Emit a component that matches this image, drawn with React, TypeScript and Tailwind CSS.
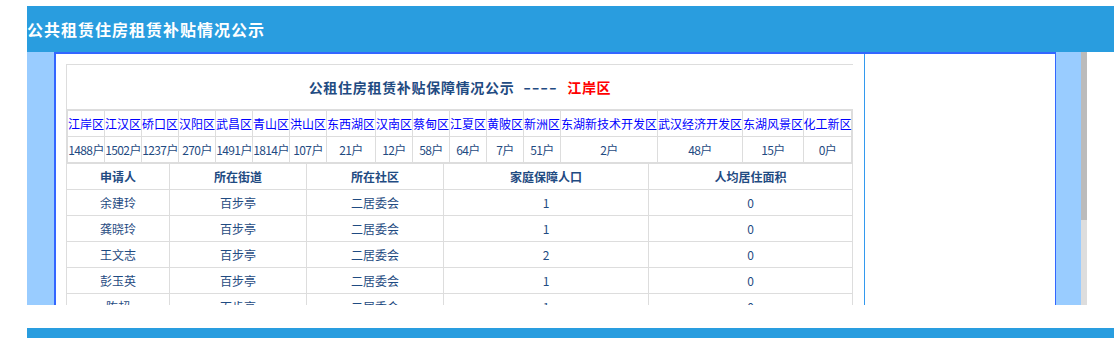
const districts: [string, string, number][] = [
  ["江岸区", "1488户", 37],
  ["江汉区", "1502户", 37],
  ["硚口区", "1237户", 37],
  ["汉阳区", "270户", 37],
  ["武昌区", "1491户", 37],
  ["青山区", "1814户", 37],
  ["洪山区", "107户", 37],
  ["东西湖区", "21户", 49],
  ["汉南区", "12户", 37],
  ["蔡甸区", "58户", 37],
  ["江夏区", "64户", 37],
  ["黄陂区", "7户", 37],
  ["新洲区", "51户", 37],
  ["东湖新技术开发区", "2户", 97],
  ["武汉经济开发区", "48户", 85],
  ["东湖风景区", "15户", 61],
  ["化工新区", "0户", 47],
];

const widthClass: Record<number, string> = {
  37: "w-[37px]",
  49: "w-[49px]",
  97: "w-[97px]",
  85: "w-[85px]",
  61: "w-[61px]",
  47: "w-[47px]",
};

const rows = [
  ["余建玲", "百步亭", "二居委会", "1", "0"],
  ["龚晓玲", "百步亭", "二居委会", "1", "0"],
  ["王文志", "百步亭", "二居委会", "2", "0"],
  ["彭玉英", "百步亭", "二居委会", "1", "0"],
  ["陈超", "百步亭", "二居委会", "1", "0"],
];

const colClass = [
  "w-[103px]",
  "w-[137px]",
  "w-[137px]",
  "w-[205px]",
  "w-[204px]",
];

const headers = ["申请人", "所在街道", "所在社区", "家庭保障人口", "人均居住面积"];

const DistrictTable = () => (
  <div className="border-2 border-[#dddddd] w-[787px]">
    {/* names */}
    <div className="flex h-[26px] border-b border-[#dddddd]">
      {districts.map(([name, , w], i) => (
        <div
          key={name}
          className={`${widthClass[w]} shrink-0 flex items-center justify-center text-[#0000ff] whitespace-nowrap ${
            i < districts.length - 1 ? "border-r border-[#dddddd]" : ""
          }`}
        >
          {name}
        </div>
      ))}
    </div>
    {/* counts */}
    <div className="flex h-[25px]">
      {districts.map(([name, count, w], i) => (
        <div
          key={name}
          className={`${widthClass[w]} shrink-0 flex items-center justify-center text-[#1f4b82] whitespace-nowrap tracking-[-0.6px] ${
            i < districts.length - 1 ? "border-r border-[#dddddd]" : ""
          }`}
        >
          {count}
        </div>
      ))}
    </div>
  </div>
);

export default function App() {
  return (
    <div className="w-[1114px] h-[338px] bg-white overflow-hidden font-['Noto_Sans_CJK_SC',sans-serif] text-[12px] leading-none">
      {/* page header */}
      <div className="ml-[27px] mt-[6px] h-[46px] bg-[#299ddf] flex items-center">
        <h1 className="text-white text-[16px] font-bold tracking-[1px]">
          公共租赁住房租赁补贴情况公示
        </h1>
      </div>

      {/* middle frame */}
      <div className="ml-[27px] flex h-[253px]">
        <div className="w-[27px] shrink-0 bg-[#99ccff]" />
        <div className="w-[1002px] shrink-0 border-l-2 border-t-2 border-r border-[#3366ff] flex overflow-hidden">
          <div className="w-[809px] shrink-0 border-r border-[#3399ee] pl-[10px] pt-[10px] overflow-hidden">
            {/* title */}
            <div className="h-[45px] w-[787px] border-t border-l border-[#dddddd] flex items-center justify-center text-[14px] font-bold text-[#1f4b82] tracking-[0.7px]">
              公租住房租赁补贴保障情况公示
              <span className="ml-[15px] mr-[15px] tracking-[0.5px] inline-block scale-x-150">----</span>
              <span className="text-[#ff0000]">江岸区</span>
            </div>

            <DistrictTable />

            {/* applicants */}
            <div className="w-[787px] border-l border-[#dddddd] text-[#1f4b82]">
              <div className="flex h-[26px] border-b border-[#dddddd] font-bold">
                {headers.map((h, i) => (
                  <div
                    key={h}
                    className={`${colClass[i]} shrink-0 border-r border-[#dddddd] flex items-center justify-center`}
                  >
                    {h}
                  </div>
                ))}
              </div>
              {rows.map((r) => (
                <div key={r[0]} className="flex h-[26px] border-b border-[#dddddd]">
                  {r.map((c, i) => (
                    <div
                      key={i}
                      className={`${colClass[i]} shrink-0 border-r border-[#dddddd] flex items-center justify-center`}
                    >
                      {c}
                    </div>
                  ))}
                </div>
              ))}
            </div>
          </div>
        </div>
        <div className="w-[25px] shrink-0 bg-[#99ccff]" />
        <div className="w-[6px] shrink-0 flex flex-col">
          <div className="h-[168px] bg-[#bbbbbb]" />
          <div className="flex-1 bg-[#dddddd]" />
        </div>
      </div>

      <div className="h-[23px]" />
      {/* bottom bar */}
      <div className="ml-[27px] h-[10px] bg-[#299ddf]" />
    </div>
  );
}
